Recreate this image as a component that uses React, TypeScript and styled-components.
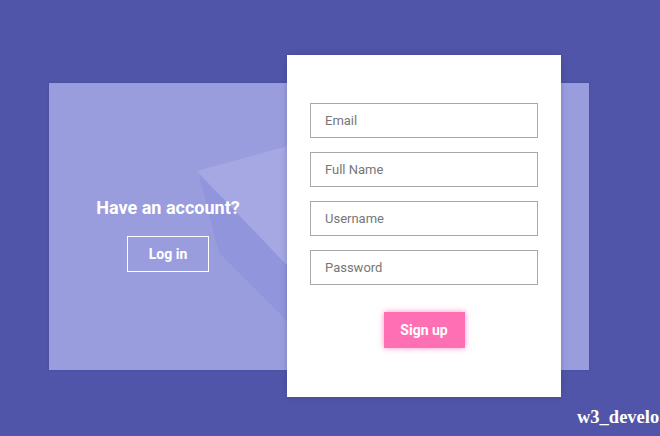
import React from "react";
import styled, { createGlobalStyle } from "styled-components";

const Global = createGlobalStyle`
  html, body { margin: 0; padding: 0; }
  body {
    background: #5155a9;
    font-family: Roboto, "Liberation Sans", Arial, sans-serif;
    overflow: hidden;
  }
`;

const Page = styled.div`
  position: relative;
  width: 660px;
  height: 436px;
  box-sizing: border-box;
  padding: 55px 0 0 49px;
  overflow: hidden;
`;

const Stage = styled.div`
  display: grid;
  grid-template-areas: "stack";
  width: 540px;
  height: 342px;
`;

const Panel = styled.div`
  grid-area: stack;
  align-self: center;
  position: relative;
  height: 287px;
  background: #999dde;
  overflow: hidden;
  display: flex;
  box-shadow: 0 0 2px rgba(40, 40, 120, 0.25);
`;

const Shapes = styled.svg`
  position: absolute;
  inset: 0;
  width: 100%;
  height: 100%;
`;

const LeftSide = styled.div`
  position: relative;
  width: 238px;
  display: flex;
  flex-direction: column;
  align-items: center;
  padding-top: 114px;
  box-sizing: border-box;
`;

const Heading = styled.h2`
  margin: 0;
  color: #fff;
  font-size: 18px;
  font-weight: 700;
  line-height: 22px;
`;

const OutlineButton = styled.button`
  margin-top: 17px;
  width: 82px;
  height: 36px;
  background: transparent;
  border: 1px solid #fff;
  color: #fff;
  font-family: Roboto, "Liberation Sans", Arial, sans-serif;
  font-size: 14px;
  font-weight: 700;
  padding: 0;
`;

const Card = styled.form`
  grid-area: stack;
  justify-self: end;
  margin-right: 28px;
  width: 274px;
  height: 342px;
  background: #fff;
  box-sizing: border-box;
  padding: 48px 23px 0;
  display: flex;
  flex-direction: column;
  gap: 14px;
  box-shadow: 0 0 6px rgba(30, 30, 80, 0.25);
  position: relative;
  z-index: 1;
`;

const Field = styled.input`
  width: 228px;
  height: 35px;
  box-sizing: border-box;
  border: 1px solid #a8a8a8;
  padding: 0 14px;
  font-family: Roboto, "Liberation Sans", Arial, sans-serif;
  font-size: 13px;
  color: #333;
  outline: none;
  &::placeholder { color: #777; }
`;

const Submit = styled.button`
  align-self: center;
  margin-top: 13px;
  width: 81px;
  height: 36px;
  border: none;
  background: #ff6fb3;
  color: #fff;
  font-family: Roboto, "Liberation Sans", Arial, sans-serif;
  font-size: 14px;
  font-weight: 700;
  box-shadow: 0 0 6px rgba(255, 100, 180, 0.7);
  padding: 0;
`;

const Watermark = styled.div`
  position: absolute;
  left: 577px;
  top: 407px;
  color: #fff;
  font-family: "Liberation Serif", "Times New Roman", serif;
  font-weight: 700;
  font-size: 18.5px;
  white-space: nowrap;
`;

export default function App() {
  return (
    <>
      <Global />
      <Page>
        <Stage>
          <Panel>
            <Shapes viewBox="0 0 540 287" preserveAspectRatio="none">
              <polygon points="150,92 250,190 250,250 170,170" fill="#9195db" />
              <polygon points="148,88 250,60 250,195" fill="#a5a8e3" />
            </Shapes>
            <LeftSide>
              <Heading>Have an account?</Heading>
              <OutlineButton type="button">Log in</OutlineButton>
            </LeftSide>
          </Panel>
          <Card onSubmit={(e) => e.preventDefault()}>
            <Field placeholder="Email" />
            <Field placeholder="Full Name" />
            <Field placeholder="Username" />
            <Field placeholder="Password" type="password" />
            <Submit type="submit">Sign up</Submit>
          </Card>
        </Stage>
        <Watermark>w3_develo</Watermark>
      </Page>
    </>
  );
}
